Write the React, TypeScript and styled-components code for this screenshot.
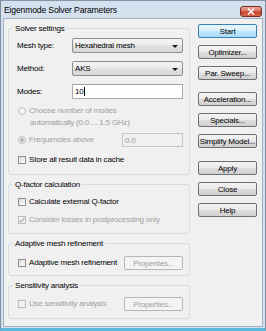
import React from 'react';
import styled, { createGlobalStyle, css } from 'styled-components';

const Global = createGlobalStyle`
  html, body { margin: 0; padding: 0; background: #ffffff; }
  body { font-family: "Liberation Sans", Arial, sans-serif; color: #000; }
  * { box-sizing: border-box; }
`;

const Window = styled.div`
  width: 266px;
  height: 331px;
  display: flex;
  flex-direction: column;
  background: #d4e0ee;
  border-top: 1px solid #8594a6;
  border-left: 1px solid #7f8ea0;
  border-right: 1px solid #7f8ea0;
  border-bottom: 3px solid #5cb9dc;
`;

const TitleBar = styled.div`
  height: 17px;
  display: flex;
  align-items: center;
  justify-content: space-between;
  padding: 0 3px 0 3px;
`;

const Title = styled.div`
  font-size: 8.6px;
  letter-spacing: -0.15px;
  line-height: 10px;
  margin-top: 1px;
  white-space: nowrap;
`;

const CloseButton = styled.div`
  width: 22px;
  height: 11px;
  align-self: flex-end;
  margin-bottom: 1px;
  border: 1px solid #7a2a1e;
  border-radius: 3px;
  background: linear-gradient(#e9a99b 0%, #d8705c 45%, #c5432e 55%, #d4664c 100%);
  display: flex;
  align-items: center;
  justify-content: center;
`;

const Client = styled.div`
  flex: 1;
  margin: 0 2px 1px 2px;
  border: 1px solid #9fb0c2;
  background: #f0f0f0;
  display: flex;
  gap: 8px;
  padding: 4px 5px 0 4px;
  font-size: 8px;
  letter-spacing: -0.2px;
`;

const LeftColumn = styled.div`
  width: 182px;
  display: flex;
  flex-direction: column;
  gap: 4px;
`;

const RightColumn = styled.div`
  width: 59px;
  margin-top: 1px;
  display: flex;
  flex-direction: column;
  gap: 7px;
`;

const Group = styled.fieldset`
  margin: 0;
  padding: 0;
  min-width: 0;
  border: 1px solid #d5dce2;
  border-radius: 3px;
`;

const Legend = styled.legend`
  margin-left: 4px;
  padding: 0 2px;
  line-height: 11px;
  white-space: nowrap;
`;

const GroupBody = styled.div<{ $pt: number; $pb: number }>`
  padding: ${(p) => p.$pt}px 6px ${(p) => p.$pb}px 8px;
  display: flex;
  flex-direction: column;
`;

const FieldRow = styled.div<{ $mt?: number }>`
  display: grid;
  grid-template-columns: 55px 111px;
  align-items: center;
  height: 15px;
  margin-top: ${(p) => p.$mt ?? 0}px;
`;

const Label = styled.span<{ $disabled?: boolean }>`
  line-height: 10px;
  white-space: nowrap;
  color: ${(p) => (p.$disabled ? '#a0a0a0' : '#000')};
`;

const Select = styled.div`
  height: 15px;
  border: 1px solid #8e8f8f;
  border-radius: 2px;
  background: linear-gradient(#f4f4f4 0%, #ececec 48%, #e0e0e0 52%, #d8d8d8 100%);
  display: flex;
  align-items: center;
  justify-content: space-between;
  padding: 0 4px 0 2px;
`;

const Arrow = styled.span`
  width: 0;
  height: 0;
  border-left: 3px solid transparent;
  border-right: 3px solid transparent;
  border-top: 3px solid #1a1a1a;
  margin-top: 1px;
`;

const TextInput = styled.div<{ $disabled?: boolean; $w?: number }>`
  height: ${(p) => (p.$disabled ? 14 : 15)}px;
  width: ${(p) => (p.$w ? `${p.$w}px` : 'auto')};
  border: 1px solid #abadb3;
  border-top-color: #9ea1a8;
  background: #ffffff;
  display: flex;
  align-items: center;
  padding-left: 2px;
  ${(p) =>
    p.$disabled &&
    css`
      border-color: #c4c6c9;
      background: #f0f0f0;
      color: #9a9a9a;
    `}
`;

const Caret = styled.span`
  width: 1px;
  height: 9px;
  background: #000;
  margin-left: 0.5px;
`;

const OptionRow = styled.div<{ $mt?: number; $h?: number; $indent?: number }>`
  display: flex;
  align-items: center;
  height: ${(p) => p.$h ?? 10}px;
  margin-top: ${(p) => p.$mt ?? 0}px;
  padding-left: ${(p) => p.$indent ?? 0}px;
`;

const Spread = styled(OptionRow)`
  justify-content: space-between;
`;

const Choice = styled.div`
  display: flex;
  align-items: center;
  gap: 3px;
`;

const CheckBox = styled.span<{ $disabled?: boolean }>`
  width: 8px;
  height: 8px;
  margin-left: 1px;
  border: 1px solid ${(p) => (p.$disabled ? '#bcbcbc' : '#8f8f8f')};
  background: ${(p) =>
    p.$disabled ? '#f4f4f4' : 'linear-gradient(135deg, #d8dadd 0%, #f4f4f4 70%, #ffffff 100%)'};
  display: flex;
  align-items: center;
  justify-content: center;
`;

const Radio = styled.span<{ $disabled?: boolean }>`
  width: 8px;
  height: 8px;
  margin-left: 1px;
  border-radius: 50%;
  border: 1px solid ${(p) => (p.$disabled ? '#bdbdbd' : '#8f8f8f')};
  background: #f4f4f4;
  display: flex;
  align-items: center;
  justify-content: center;
`;

const RadioDot = styled.span`
  width: 4px;
  height: 4px;
  border-radius: 50%;
  background: #b4b4b4;
`;

const Button = styled.div<{ $default?: boolean; $disabled?: boolean; $mt?: number }>`
  height: 14px;
  margin-top: ${(p) => p.$mt ?? 0}px;
  border: 1px solid #707070;
  border-radius: 2px;
  background: linear-gradient(#f3f3f3 0%, #ebebeb 48%, #dddddd 52%, #d0d0d0 100%);
  display: flex;
  align-items: center;
  justify-content: center;
  white-space: nowrap;
  ${(p) =>
    p.$default &&
    css`
      border-color: #3c7fb1;
      background: linear-gradient(#eaf6fd 0%, #d9f0fc 48%, #bee6fd 52%, #a9dbf6 100%);
    `}
  ${(p) =>
    p.$disabled &&
    css`
      border-color: #b5b8bb;
      background: #f4f4f4;
      color: #a0a0a0;
    `}
`;

const SmallButton = styled(Button)`
  width: 59px;
`;

const Check = ({ color }: { color: string }) => (
  <svg width="6" height="6" viewBox="0 0 6 6">
    <path d="M0.6 3.2 L2.3 4.9 L5.4 0.9" fill="none" stroke={color} strokeWidth="1.1" />
  </svg>
);

export default function App() {
  return (
    <>
      <Global />
      <Window>
        <TitleBar>
          <Title>Eigenmode Solver Parameters</Title>
          <CloseButton>
            <svg width="8" height="7" viewBox="0 0 8 7">
              <path d="M1 0.5 L7 6.5 M7 0.5 L1 6.5" stroke="#ffffff" strokeWidth="1.6" />
            </svg>
          </CloseButton>
        </TitleBar>
        <Client>
          <LeftColumn>
            <Group>
              <Legend>Solver settings</Legend>
              <GroupBody $pt={4} $pb={9}>
                <FieldRow>
                  <Label>Mesh type:</Label>
                  <Select>
                    <span>Hexahedral mesh</span>
                    <Arrow />
                  </Select>
                </FieldRow>
                <FieldRow $mt={8}>
                  <Label>Method:</Label>
                  <Select>
                    <span>AKS</span>
                    <Arrow />
                  </Select>
                </FieldRow>
                <FieldRow $mt={8}>
                  <Label>Modes:</Label>
                  <TextInput>
                    <span>10</span>
                    <Caret />
                  </TextInput>
                </FieldRow>
                <OptionRow $mt={7}>
                  <Choice>
                    <Radio $disabled />
                    <Label $disabled>Choose number of modes</Label>
                  </Choice>
                </OptionRow>
                <OptionRow $mt={2} $indent={13}>
                  <Label $disabled>automatically (0.0 ... 1.5 GHz)</Label>
                </OptionRow>
                <Spread $mt={5} $h={14}>
                  <Choice>
                    <Radio $disabled>
                      <RadioDot />
                    </Radio>
                    <Label $disabled>Frequencies above</Label>
                  </Choice>
                  <TextInput $disabled $w={61}>
                    <span>0.0</span>
                  </TextInput>
                </Spread>
                <OptionRow $mt={8}>
                  <Choice>
                    <CheckBox />
                    <Label>Store all result data in cache</Label>
                  </Choice>
                </OptionRow>
              </GroupBody>
            </Group>

            <Group>
              <Legend>Q-factor calculation</Legend>
              <GroupBody $pt={7} $pb={8}>
                <OptionRow>
                  <Choice>
                    <CheckBox />
                    <Label>Calculate external Q-factor</Label>
                  </Choice>
                </OptionRow>
                <OptionRow $mt={8}>
                  <Choice>
                    <CheckBox $disabled>
                      <Check color="#a8a8a8" />
                    </CheckBox>
                    <Label $disabled>Consider losses in postprocessing only</Label>
                  </Choice>
                </OptionRow>
              </GroupBody>
            </Group>

            <Group>
              <Legend>Adaptive mesh refinement</Legend>
              <GroupBody $pt={7} $pb={5}>
                <Spread $h={14}>
                  <Choice>
                    <CheckBox />
                    <Label>Adaptive mesh refinement</Label>
                  </Choice>
                  <SmallButton $disabled>Properties...</SmallButton>
                </Spread>
              </GroupBody>
            </Group>

            <Group>
              <Legend>Sensitivity analysis</Legend>
              <GroupBody $pt={6} $pb={7}>
                <Spread $h={14}>
                  <Choice>
                    <CheckBox $disabled />
                    <Label $disabled>Use sensitivity analysis</Label>
                  </Choice>
                  <SmallButton $disabled>Properties...</SmallButton>
                </Spread>
              </GroupBody>
            </Group>
          </LeftColumn>

          <RightColumn>
            <Button $default>Start</Button>
            <Button>Optimizer...</Button>
            <Button>Par. Sweep...</Button>
            <Button $mt={5}>Acceleration...</Button>
            <Button>Specials...</Button>
            <Button>Simplify Model...</Button>
            <Button $mt={6}>Apply</Button>
            <Button>Close</Button>
            <Button>Help</Button>
          </RightColumn>
        </Client>
      </Window>
    </>
  );
}
